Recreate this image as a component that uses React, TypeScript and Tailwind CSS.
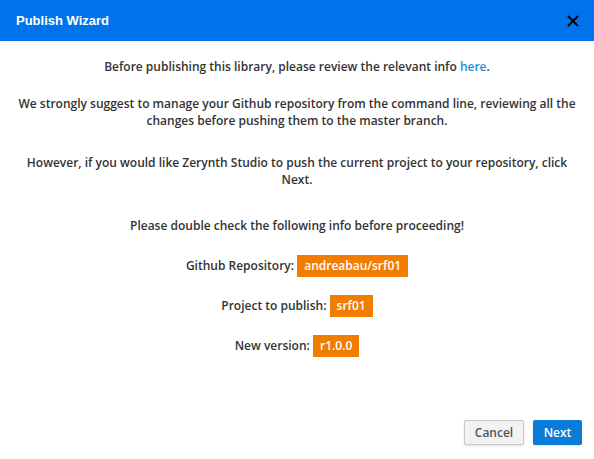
import { X } from "lucide-react";

function Badge({ children }: { children: React.ReactNode }) {
  return (
    <span className="inline-block bg-[#f07d00] px-[7px] leading-[22px] text-white">{children}</span>
  );
}

export default function App() {
  return (
    <div className="flex h-[459px] w-[594px] flex-col bg-white">
      {/* Header */}
      <div className="flex h-[41px] items-center justify-between bg-[#0073ec] pl-4 pr-[12px]">
        <h1 className="font-['Liberation_Sans',Arial,sans-serif] text-[13px] font-bold text-white">Publish Wizard</h1>
        <X size={18} strokeWidth={2.5} className="text-black" />
      </div>

      {/* Body */}
      <div className="flex flex-1 flex-col items-center px-[12px] pt-[17px] text-center font-['Open_Sans',sans-serif] text-[12px] font-semibold leading-[17px] text-[#333]">
        <p>
          Before publishing this library, please review the relevant info{" "}
          <span className="text-[#1e8fdc]">here</span>.
        </p>
        <p className="mt-[20px]">
          We strongly suggest to manage your Github repository from the command line, reviewing all the
          <br />
          changes before pushing them to the master branch.
        </p>
        <p className="mt-[25px]">
          However, if you would like Zerynth Studio to push the current project to your repository, click
          <br />
          Next.
        </p>
        <p className="mt-[29px]">Please double check the following info before proceeding!</p>
        <p className="mt-[21px]">
          Github Repository: <Badge>andreabau/srf01</Badge>
        </p>
        <p className="mt-[18px]">
          Project to publish: <Badge>srf01</Badge>
        </p>
        <p className="mt-[18px]">
          New version: <Badge>r1.0.0</Badge>
        </p>
      </div>

      {/* Footer */}
      <div className="flex justify-end gap-[9px] px-[12px] pb-[14px] font-['Open_Sans',sans-serif] text-[12px] font-semibold">
        <button className="h-[25px] w-[60px] rounded-[2px] border border-[#c8c8c8] bg-[#f2f2f2] text-[#555] shadow-sm">
          Cancel
        </button>
        <button className="h-[25px] w-[49px] rounded-[2px] bg-[#0b7bd8] text-white shadow-sm">Next</button>
      </div>
    </div>
  );
}
